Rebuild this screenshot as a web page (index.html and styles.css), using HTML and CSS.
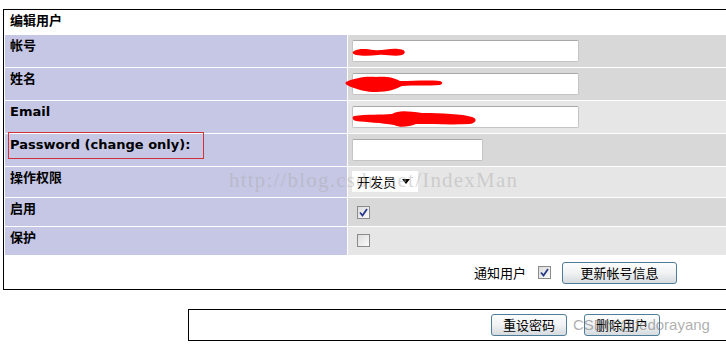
FILE: index.html
```html
<!DOCTYPE html>
<html>

<head>
  <meta charset="UTF-8">
  <title>编辑用户</title>
  <link rel="stylesheet" href="styles.css">
</head>

<body>
  <div class="panel">
    <div class="caption">编辑用户</div>

    <div class="label">帐号</div>
    <div class="value dark">
      <div class="field wide"></div>
      <svg class="scribble s1" width="56" height="12" viewBox="0 0 56 12">
        <path d="M2 5 C8 2 14 3 22 4 C30 5 38 2 46 3 C53 3 55 7 50 9 C42 11 34 8 26 9 C18 10 10 10 4 9 C0 8 0 6 2 5 Z" fill="#f00"/>
      </svg>
    </div>

    <div class="label">姓名</div>
    <div class="value dark">
      <div class="field wide"></div>
      <svg class="scribble s2" width="100" height="22" viewBox="0 0 100 22">
        <path d="M2 9 C10 5 22 3 32 4 C40 3 50 4 56 8 C70 8 84 7 96 8 C99 9 99 11 96 12 C84 13 70 12 58 13 C52 16 44 19 32 19 C22 19 16 17 10 15 C4 13 0 11 2 9 Z" fill="#f00"/>
      </svg>
    </div>

    <div class="label">Email</div>
    <div class="value light">
      <div class="field wide"></div>
      <svg class="scribble s3" width="126" height="18" viewBox="0 0 126 18">
        <path d="M2 6 C14 4 30 5 40 4 C46 0 56 1 70 3 C90 3 110 4 120 7 C126 9 124 13 118 14 C100 15 80 14 64 14 C56 17 48 18 42 15 C30 13 14 12 4 11 C0 10 0 7 2 6 Z" fill="#f00"/>
      </svg>
    </div>

    <div class="label">
      <span class="mark"></span>Password (change only):
    </div>
    <div class="value dark">
      <div class="field short"></div>
    </div>

    <div class="label">操作权限</div>
    <div class="value light">
      <div class="select">开发员<span class="arrow"></span></div>
    </div>

    <div class="label">启用</div>
    <div class="value dark boxed">
      <span class="check">
        <svg width="9" height="9" viewBox="0 0 9 9"><path d="M1 4.5 L3.5 7.5 L8 1" fill="none" stroke="#2a3a8a" stroke-width="1.8"/></svg>
      </span>
    </div>

    <div class="label">保护</div>
    <div class="value light boxed">
      <span class="check"></span>
    </div>

    <div class="notify">
      <span class="notify-text">通知用户</span>
      <span class="check">
        <svg width="9" height="9" viewBox="0 0 9 9"><path d="M1 4.5 L3.5 7.5 L8 1" fill="none" stroke="#2a3a8a" stroke-width="1.8"/></svg>
      </span>
      <button class="btn btn-wide">更新帐号信息</button>
    </div>

    <div class="watermark">http://blog.csdn.net/IndexMan</div>
  </div>

  <div class="actions">
    <button class="btn">重设密码</button>
    <button class="btn">删除用户</button>
    <span class="csdn">CSDN @fedorayang</span>
  </div>
</body>

</html>
```

FILE: styles.css
```css
body,
html {
  padding: 0;
  margin: 0;
}

body {
  font-family: "DejaVu Sans", "Noto Sans CJK SC", sans-serif;
  font-size: 13px;
  background: #FFF;
  width: 726px;
  height: 344px;
  overflow: hidden;
}

.panel {
  position: relative;
  width: 760px;
  margin: 9px 0 0 3px;
  border: 1px solid #000;
  padding: 1px;
  display: grid;
  grid-template-columns: 342px 1fr;
  grid-template-rows: 23px 32px 32px 32px 32px 30px 28px 28px 32px;
  gap: 1px;
  background: #FFF;
}

.caption {
  grid-column: 1 / 3;
  padding: 2px 5px 0;
  font-weight: bold;
  line-height: 16px;
}

.label {
  position: relative;
  background: #c6c7e5;
  font-weight: bold;
  padding: 3px 5px 0;
  line-height: 16px;
}

.value {
  position: relative;
  padding: 5px 4px 0;
}

.dark {
  background: #d8d8d8;
}

.light {
  background: #e6e6e6;
}

.field {
  height: 20px;
  background: #FFF;
  border: 1px solid #c4c4c4;
  border-top-color: #a8a8a8;
  border-radius: 2px;
}

.wide {
  width: 225px;
}

.short {
  width: 129px;
}

.scribble {
  position: absolute;
}

.s1 {
  left: 4px;
  top: 11px;
}

.s2 {
  left: -4px;
  top: 5px;
}

.s3 {
  left: 4px;
  top: 9px;
}

.mark {
  position: absolute;
  left: 3px;
  top: -2px;
  width: 194px;
  height: 25px;
  border: 1px solid #d0303a;
}

.select {
  display: flex;
  align-items: center;
  width: 61px;
  height: 21px;
  margin-top: -1px;
  padding-left: 5px;
  background: #FFF;
  font-family: "Noto Sans CJK SC", sans-serif;
}

.arrow {
  margin-left: 6px;
  border-left: 4px solid transparent;
  border-right: 4px solid transparent;
  border-top: 5px solid #000;
}

.boxed {
  padding: 7px 9px 0;
}

.check {
  display: inline-flex;
  align-items: center;
  justify-content: center;
  width: 11px;
  height: 11px;
  border: 1px solid #8a8a8a;
  background: linear-gradient(135deg, #dcdcdc, #fafafa);
}

.notify {
  grid-column: 1 / 3;
  display: flex;
  align-items: center;
  padding-left: 469px;
  padding-top: 1px;
}

.notify-text {
  font-family: "Noto Sans CJK SC", sans-serif;
  margin-right: 12px;
}

.notify .check {
  margin-right: 11px;
}

.btn {
  height: 22px;
  width: 76px;
  padding: 0;
  border: 1px solid #4d7d98;
  border-radius: 3px;
  background: linear-gradient(#fdfdfd, #f0f2f3 50%, #d6dbdf);
  font-family: "Noto Sans CJK SC", sans-serif;
  font-size: 13px;
  line-height: 18px;
  color: #000;
}

.btn-wide {
  width: 115px;
}

.watermark {
  position: absolute;
  left: 225px;
  top: 158px;
  font-family: "Liberation Serif", serif;
  font-size: 21px;
  letter-spacing: 1.2px;
  color: rgba(170, 170, 170, 0.45);
  pointer-events: none;
}

.actions {
  position: relative;
  width: 600px;
  height: 32px;
  margin: 19px 0 0 188px;
  border: 1px solid #000;
  display: flex;
  align-items: flex-start;
  gap: 17px;
  padding: 4px 0 0 302px;
  box-sizing: border-box;
}

.csdn {
  position: absolute;
  left: 384px;
  top: 6px;
  font-family: "Liberation Sans", sans-serif;
  font-size: 15px;
  color: rgba(120, 120, 120, 0.6);
  pointer-events: none;
}
```
